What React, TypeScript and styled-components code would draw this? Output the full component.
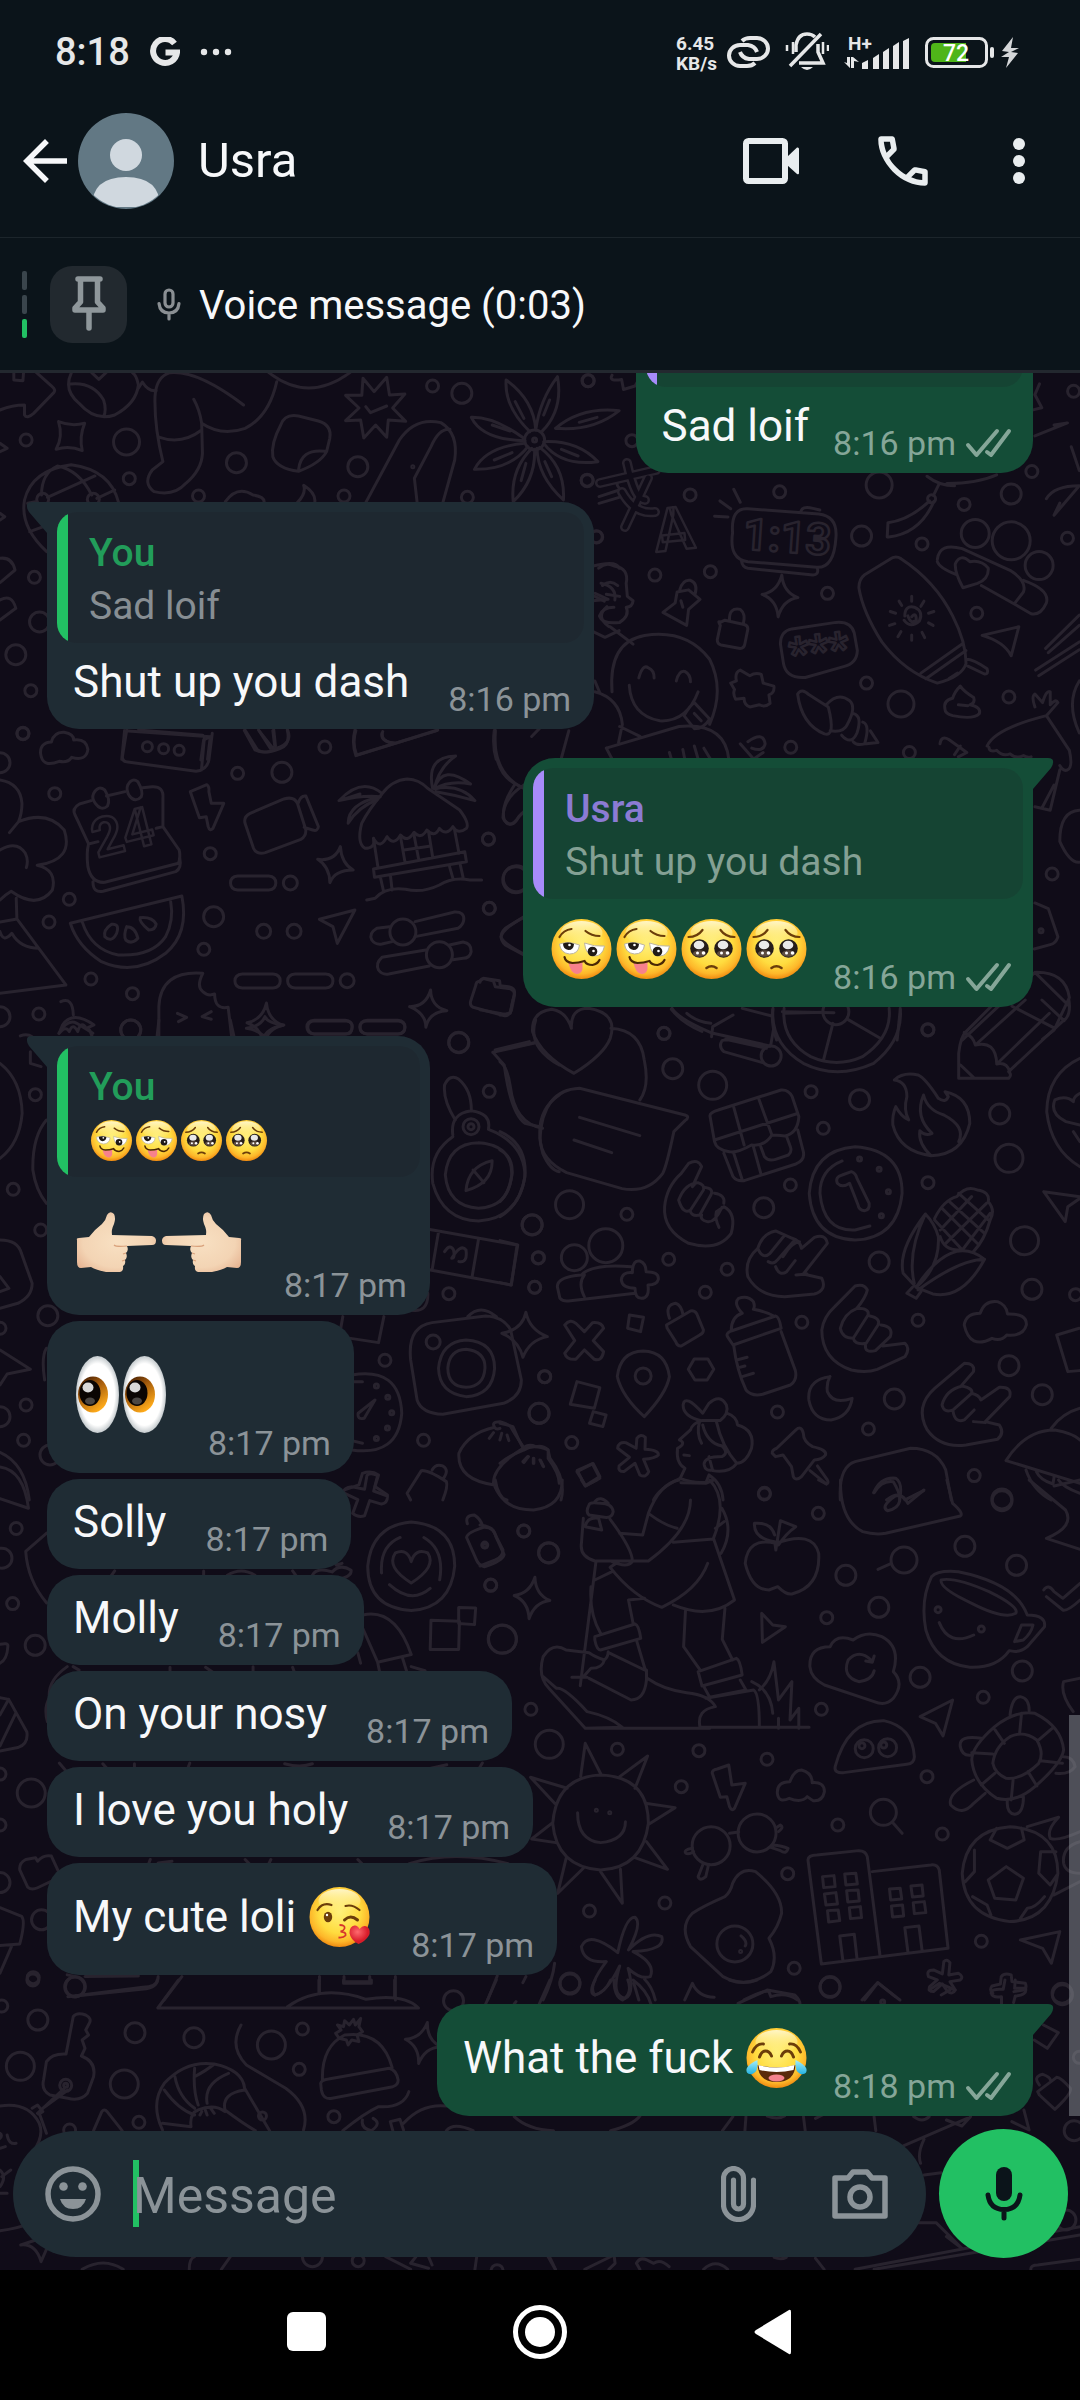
import React from "react";
import styled, { createGlobalStyle, css } from "styled-components";

/* ---------- base ---------- */

const Global = createGlobalStyle`
  *, *::before, *::after { box-sizing: border-box; }
  body { margin: 0; background: #000; }
  button { border: 0; padding: 0; background: none; color: inherit; font: inherit; cursor: pointer; }
`;

const c = {
  bar: "#0b141a",
  barIcon: "#e9edef",
  wall: "#100c18",
  doodle: "#28232e",
  incoming: "#1f2c34",
  incomingQuote: "#1e2830",
  outgoing: "#144d37",
  outgoingQuote: "#154433",
  text: "#f7f8fa",
  muted: "#8b9398",
  mutedOut: "#85a698",
  green: "#22c063",
  violet: "#a78bfa",
};

const Screen = styled.div`
  display: flex;
  flex-direction: column;
  height: 100vh;
  font-family: Roboto, "Noto Sans", sans-serif;
  color: ${c.text};
  background: ${c.bar};
`;

/* ---------- status bar ---------- */

const StatusBar = styled.div`
  display: flex;
  align-items: center;
  justify-content: space-between;
  height: 85px;
  padding: 19px 61px 0 55px;
  color: #e6e7e8;
`;

const StatusGroup = styled.div<{ $gap: number }>`
  display: flex;
  align-items: center;
  gap: ${(p) => p.$gap}px;
`;

const Clock = styled.span`
  font-size: 38px;
  font-weight: 500;
  line-height: 44px;
`;

const Speed = styled.span`
  display: flex;
  flex-direction: column;
  padding-top: 4px;
  font-size: 19px;
  font-weight: 700;
  line-height: 20px;
`;

/* ---------- chat header ---------- */

const Header = styled.header`
  display: flex;
  align-items: center;
  height: 153px;
  padding: 0 12px;
  border-bottom: 1px solid #1c252b;
`;

const Contact = styled.button`
  display: flex;
  flex: 1;
  align-items: center;
  gap: 24px;
  min-width: 0;
`;

const Name = styled.span`
  font-size: 49px;
  line-height: 56px;
`;

const IconButton = styled.button<{ $width: number }>`
  display: flex;
  align-items: center;
  justify-content: center;
  width: ${(p) => p.$width}px;
  height: 96px;
  color: ${c.barIcon};
`;

/* ---------- pinned message ---------- */

const PinnedBar = styled.button`
  display: flex;
  align-items: center;
  height: 135px;
  padding-left: 22px;
  border-bottom: 3px solid #23282f;
  text-align: left;
`;

const Markers = styled.span`
  display: flex;
  flex-direction: column;
  gap: 5px;
  margin-right: 23px;
`;

const Marker = styled.span<{ $active?: boolean }>`
  width: 5px;
  height: 19px;
  border-radius: 2px;
  background: ${(p) => (p.$active ? c.green : "#3a454c")};
`;

const PinTile = styled.span`
  display: flex;
  align-items: center;
  justify-content: center;
  width: 77px;
  height: 77px;
  margin-right: 30px;
  border-radius: 22px;
  background: #22292f;
`;

const PinnedText = styled.span`
  margin-left: 18px;
  padding-top: 4px;
  font-size: 40px;
  line-height: 48px;
`;

/* ---------- conversation ---------- */

const Chat = styled.main`
  position: relative;
  display: flex;
  flex: 1;
  flex-direction: column;
  min-height: 0;
  overflow: hidden;
  background: ${c.wall};
`;

const Wallpaper = styled.svg`
  position: absolute;
  inset: 0;
  width: 100%;
  height: 100%;
  fill: none;
  stroke: ${c.doodle};
  stroke-width: 3;
  stroke-linecap: round;
  stroke-linejoin: round;
  path { vector-effect: non-scaling-stroke; }
`;

const Messages = styled.ol`
  position: relative;
  display: flex;
  flex: 1;
  flex-direction: column;
  justify-content: flex-end;
  min-height: 0;
  margin: 0;
  padding: 0 47px;
  list-style: none;
  overflow: hidden;
`;

const ScrollThumb = styled.span`
  position: absolute;
  right: 0;
  bottom: 0;
  width: 11px;
  height: 23%;
  background: rgba(139, 146, 152, 0.5);
`;

const Bubble = styled.li<{ $out?: boolean; $tail?: boolean; $joined?: boolean }>`
  position: relative;
  flex: none;
  align-self: ${(p) => (p.$out ? "flex-end" : "flex-start")};
  margin-top: ${(p) => (p.$joined ? 6 : 29)}px;
  padding: 10px;
  border-radius: 32px;
  background: ${(p) => (p.$out ? c.outgoing : c.incoming)};
  ${(p) => p.$tail && (p.$out ? css`border-top-right-radius: 0;` : css`border-top-left-radius: 0;`)}
`;

const TailShape = styled.svg<{ $out?: boolean }>`
  position: absolute;
  top: 0;
  ${(p) => (p.$out ? "left: 100%;" : "right: 100%; transform: scaleX(-1);")}
  fill: ${(p) => (p.$out ? c.outgoing : c.incoming)};
`;

const Quote = styled.blockquote<{ $out?: boolean }>`
  margin: 0;
  min-height: 131px;
  padding: 18px 20px 14px 32px;
  border-radius: 20px;
  background: linear-gradient(
    to right,
    ${(p) => (p.$out ? c.violet : c.green)} 11px,
    ${(p) => (p.$out ? c.outgoingQuote : c.incomingQuote)} 11px
  );
  font-size: 39px;
  line-height: 46px;
`;

const QuoteName = styled.div<{ $out?: boolean }>`
  margin-bottom: 7px;
  font-weight: 500;
  color: ${(p) => (p.$out ? "#8b7bd4" : "#229d5a")};
`;

const QuoteText = styled.div<{ $out?: boolean }>`
  display: flex;
  align-items: center;
  min-height: 46px;
  color: ${(p) => (p.$out ? "#84a094" : "#878e93")};
`;

const Row = styled.div<{ $out?: boolean; $quoted?: boolean }>`
  display: flex;
  align-items: flex-end;
  justify-content: space-between;
  gap: ${(p) => (p.$out ? 24 : 39)}px;
  padding: ${(p) => (p.$quoted ? 13 : 7)}px 13px 0 16px;
`;

const Body = styled.div`
  display: flex;
  align-items: center;
  padding-bottom: 11px;
  font-size: 44px;
  line-height: 52px;
  white-space: pre;
`;

const Meta = styled.div<{ $out?: boolean }>`
  display: flex;
  align-items: center;
  gap: 10px;
  color: ${(p) => (p.$out ? c.mutedOut : c.muted)};
  font-size: 34px;
  line-height: 40px;
  white-space: nowrap;
`;

const Glyph = styled.svg<{ $w: number; $h: number; $my?: number; $mx?: number }>`
  flex: none;
  width: ${(p) => p.$w}px;
  height: ${(p) => p.$h}px;
  margin: ${(p) => p.$my ?? 0}px ${(p) => p.$mx ?? 0}px;
  overflow: visible;
`;

/* ---------- composer ---------- */

const Composer = styled.form`
  position: relative;
  display: flex;
  align-items: center;
  gap: 13px;
  padding: 13px 12px 12px 13px;
`;

const Pill = styled.div`
  display: flex;
  flex: 1;
  align-items: center;
  min-width: 0;
  height: 126px;
  padding: 0 38px 0 32px;
  border-radius: 63px;
  background: ${c.incoming};
  color: ${c.muted};
`;

const Field = styled.label`
  position: relative;
  display: flex;
  flex: 1;
  align-items: center;
  min-width: 0;
  height: 68px;
  margin: 0 30px 0 31px;
`;

const Caret = styled.span`
  position: absolute;
  left: 1px;
  width: 6px;
  height: 67px;
  background: ${c.green};
`;

const MessageInput = styled.input`
  position: relative;
  width: 100%;
  height: 64px;
  padding: 4px 0 0 1px;
  border: 0;
  outline: 0;
  background: transparent;
  color: ${c.text};
  font: 400 50px/60px Roboto, "Noto Sans", sans-serif;
  &::placeholder { color: ${c.muted}; opacity: 1; }
`;

const PillActions = styled.div`
  display: flex;
  align-items: center;
  gap: 76px;
`;

const PlainButton = styled.button`
  display: flex;
  flex: none;
`;

const VoiceButton = styled.button`
  display: flex;
  flex: none;
  align-items: center;
  justify-content: center;
  width: 129px;
  height: 129px;
  border-radius: 50%;
  background: ${c.green};
  color: ${c.bar};
`;

/* ---------- system navigation ---------- */

const NavBar = styled.nav`
  display: flex;
  justify-content: center;
  height: 130px;
  padding-bottom: 6px;
  background: #000;
`;

const NavButton = styled.button`
  display: flex;
  align-items: center;
  justify-content: center;
  width: 233px;
`;

/* ---------- emoji drawings ---------- */

const EmojiDefs = () => (
  <defs>
    <radialGradient id="face" cx="50%" cy="42%" r="58%">
      <stop offset="0" stopColor="#fff07a" />
      <stop offset=".6" stopColor="#ffdc3f" />
      <stop offset=".85" stopColor="#fdb72a" />
      <stop offset="1" stopColor="#f08a10" />
    </radialGradient>
    <linearGradient id="shine" x1="0" y1="0" x2="0" y2="1">
      <stop offset="0" stopColor="#fffbe0" stopOpacity=".85" />
      <stop offset="1" stopColor="#fff3a0" stopOpacity="0" />
    </linearGradient>
    <radialGradient id="skin" cx="50%" cy="50%" r="65%">
      <stop offset="0" stopColor="#f8e0c2" />
      <stop offset=".65" stopColor="#f3d4b4" />
      <stop offset="1" stopColor="#e5b18f" />
    </radialGradient>
    <radialGradient id="ball">
      <stop offset=".8" stopColor="#fff" />
      <stop offset="1" stopColor="#c4cacd" />
    </radialGradient>
    <linearGradient id="iris" x1="0" y1="0" x2=".6" y2="1">
      <stop offset="0" stopColor="#2c0f02" />
      <stop offset=".45" stopColor="#a35a0c" />
      <stop offset="1" stopColor="#ffab1a" />
    </linearGradient>
    <radialGradient id="heart" cx="40%" cy="35%">
      <stop offset="0" stopColor="#ff6a6f" />
      <stop offset="1" stopColor="#d91c2a" />
    </radialGradient>
    <linearGradient id="tear" x1="0" y1="0" x2="0" y2="1">
      <stop offset="0" stopColor="#a5eefa" />
      <stop offset="1" stopColor="#27b3e0" />
    </linearGradient>
  </defs>
);

const FaceBase = () => (
  <>
    <circle cx="30" cy="30" r="30" fill="url(#face)" />
    <ellipse cx="30" cy="14" rx="21" ry="12" fill="url(#shine)" />
  </>
);

const brown = { fill: "none", stroke: "#6b3d0a", strokeWidth: 2.2, strokeLinecap: "round" as const };

const Woozy = () => (
  <>
    <FaceBase />
    <path d="M8 18Q12 11 20 10M34 12Q40 17 48 17" {...brown} />
    <path d="M8 25Q17 22 28 26Q27 35 18 35Q9 34 8 25z" fill="#fff" stroke="#bdb5a2" strokeWidth="1" />
    <path d="M33 24Q43 28 53 27Q51 37 43 37Q34 36 33 24z" fill="#fff" stroke="#bdb5a2" strokeWidth="1" />
    <path d="M11.500 24.500Q17 22.500 22.500 25Q22 31 17 31Q11.500 30 11.500 24.500z" fill="#1f1a17" />
    <circle cx="41" cy="32.500" r="4.800" fill="#1f1a17" />
    <circle cx="18" cy="26" r="1.300" fill="#fff" />
    <circle cx="42" cy="32" r="1.300" fill="#fff" />
    <path d="M17 44Q24 46 31 43L31 50Q30 55 25 55Q19 54 17 44z" fill="#f7818c" />
    <path d="M13 38Q14 43.500 21 44Q27 44 33 42Q35 46 41 46Q46 45 48 41" {...brown} stroke="#4a2705" strokeWidth={2.2} />
  </>
);

const Pleading = () => (
  <>
    <FaceBase />
    <path d="M7 18Q16 18 21 11M53 18Q44 18 39 11" {...brown} />
    {[18, 42].map((x) => (
      <g key={x}>
        <circle cx={x} cy="29.500" r="9.300" fill="#251d1a" />
        <ellipse cx={x} cy="34.500" rx="6.500" ry="3.300" fill="#5d4c41" />
        <ellipse cx={x - 0.5} cy="26" rx="5.300" ry="4.300" fill="#e9e9e9" />
        <circle cx={x - 2} cy="34" r="1.500" fill="#fff" />
        <circle cx={x + 4} cy="34" r="1.800" fill="#fff" />
      </g>
    ))}
    <path d="M25 49Q30 45.500 35 49" {...brown} strokeWidth={2.6} />
  </>
);

const Kiss = () => (
  <>
    <FaceBase />
    <path d="M8 23Q13 15 22 18M36 19Q43 17 50 23" {...brown} />
    <ellipse cx="18.500" cy="30" rx="4.200" ry="5.200" fill="#6b3d0a" />
    <circle cx="17.500" cy="28" r="1.200" fill="#fff" />
    <path d="M35 33Q41 27 48 33" {...brown} strokeWidth={3} />
    <path d="M30 38Q36 38 35 41.500Q34 44 31 44.500Q37 45 36 48.500Q34 51 29 50.500" fill="none" stroke="#d6342c" strokeWidth="1.800" />
    <path d="M49 57Q41 53 40 46Q40 39 45 38.500Q48 38 50 42Q54 37 58 40Q62 44 59 49Q56 54 49 57z" fill="url(#heart)" />
  </>
);

const Joy = () => (
  <>
    <FaceBase />
    <path d="M6 24Q10 15 17 16M54 24Q50 15 43 16" {...brown} strokeWidth={2.8} />
    <path d="M13 29Q15 23 19 23Q23 23 25 28M35 28Q37 23 41 23Q45 23 47 29" {...brown} strokeWidth={3} />
    <path d="M11 37Q30 42 49 37Q48 54 30 54Q12 54 11 37z" fill="#5a2a0b" />
    <path d="M12 37Q30 42 48 37L47 42Q30 46 13 42z" fill="#fff" />
    <ellipse cx="30" cy="50" rx="8" ry="3.500" fill="#f5838d" />
    <path d="M11 32Q12 44 6 46Q-1 47 0 41Q2 36 11 32z" fill="url(#tear)" />
    <path d="M49 32Q48 44 54 46Q61 47 60 41Q58 36 49 32z" fill="url(#tear)" />
  </>
);

const HandPath = () => (
  <>
    <path
      d="M1 28Q0 26 3 26L13 25Q18 18 26 12Q30 8 31 3Q34-2 38 2Q40 6 38 12Q35 18 36 23L76 24Q80 25 80 28.500Q80 33 76 33L51 34Q53 38 50 41Q52 45 49 48Q50 52 47 54Q48 59 44 60L30 60Q20 58 15 55L5 56Q1 56 1 50z"
      fill="url(#skin)"
    />
    <path d="M51 34Q40 35 38 33M50 41l-3 1M49 48l-3 1" fill="none" stroke="#d9a27c" strokeWidth="1.200" />
  </>
);

const Eyes = () => (
  <>
    {[0, 47].map((x) => (
      <g key={x} transform={`translate(${x} 0)`}>
        <ellipse cx="21.500" cy="38.500" rx="21.500" ry="38.500" fill="url(#ball)" />
        <ellipse cx="17" cy="38.500" rx="15" ry="18" fill="url(#iris)" />
        <ellipse cx="14" cy="37" rx="10.500" ry="13" fill="#0a0503" />
        <ellipse cx="12" cy="31.500" rx="5.500" ry="5" fill="#d8d8d8" />
        <ellipse cx="14" cy="45" rx="5" ry="3.500" fill="#4b4744" />
      </g>
    ))}
  </>
);

type Kind = "woozy" | "pleading" | "kiss" | "joy";
const faces: Record<Kind, [string, () => React.JSX.Element]> = {
  woozy: ["🥴", Woozy],
  pleading: ["🥺", Pleading],
  kiss: ["😘", Kiss],
  joy: ["😂", Joy],
};

const Emoji = ({ kind, small }: { kind: Kind; small?: boolean }) => {
  const [label, Draw] = faces[kind];
  return (
    <Glyph
      role="img"
      aria-label={label}
      viewBox="0 0 60 60"
      $w={small ? 41 : 61}
      $h={small ? 41 : 60}
      $my={small ? 0 : 7}
      $mx={2}
    >
      <Draw />
    </Glyph>
  );
};

const Hand = ({ flip }: { flip?: boolean }) => (
  <Glyph role="img" aria-label={flip ? "👈🏻" : "👉🏻"} viewBox="0 0 80 60" $w={80} $h={60} $my={22} $mx={3}>
    <g transform={flip ? "translate(80 0) scale(-1 1)" : undefined}>
      <HandPath />
    </g>
  </Glyph>
);

/* ---------- wallpaper ---------- */

const S = 6, M = 10, L = 13;
type Patch = { t: [number, number, number, number]; dots: number[][]; d: string[] };

/* Each patch is a sheet of line drawings with its own origin and scale. */
const patches: Patch[] = [
  {
    t: [0, 360, 0.3954, 0.3333],
    dots: [[66, 240, S], [320, 246, L], [598, 308, M], [327, 356, S], [502, 408, S], [905, 320, M], [870, 408, S], [1094, 78, S], [1168, 100, M], [1487, 62, S], [1485, 362, S], [1182, 412, S], [1352, 240, M], [1352, 240, 2], [1508, 530, S], [87, 652, S], [100, 786, M], [40, 884, M], [78, 992, S], [58, 1120, S], [108, 418, S], [236, 418, S], [1044, 320, 1]],
    d: [
      "M0 150Q30 135 62 135L62 165Q68 178 85 160L136 98Q142 90 132 80L85 30M35 30L35 60L58 62L60 30",
      "M180 40Q160 90 200 130Q240 185 290 165Q345 130 350 75Q345 45 335 38M178 72Q235 65 262 120Q270 150 262 170M232 38L250 58L268 38",
      "M350 85L360 66Q375 95 395 92M430 38Q395 50 392 110Q390 200 412 305L385 330Q360 370 390 395Q440 410 470 370Q510 330 512 280L510 190Q505 150 490 118M404 232Q460 255 510 210M510 190Q560 230 620 205Q680 170 700 65M430 38Q500 30 616 135M680 38Q780 130 885 38",
      "M710 195Q720 160 755 168L805 183Q840 195 834 235L826 275Q810 310 755 334Q700 325 690 290Q685 250 710 195M755 330Q760 265 822 274",
      "M918 55L946 95L978 52L985 105L1024 102L993 144L1026 184L982 180L978 232L950 195L920 234L912 180L874 182L908 144L874 106L915 106zM925 140L937 158L978 138",
      "M925 428L1010 240Q1050 170 1115 188Q1160 220 1150 300L1120 428M1138 208Q1110 205 1090 260L1048 355L1055 428",
      "M1340 215Q1275 140 1280 60Q1350 120 1355 210Q1365 120 1410 50Q1425 150 1370 215M1405 205Q1470 140 1566 152Q1500 215 1405 205M1375 245Q1460 240 1512 305Q1420 320 1375 250M1365 262Q1430 320 1425 420Q1360 350 1358 265M1345 265Q1290 330 1298 425Q1355 360 1352 268M1328 250Q1230 260 1200 328Q1290 330 1335 260M1325 235Q1250 170 1192 172Q1220 240 1328 242M1303 125L1325 175M1390 120L1375 165M1465 187L1510 172M1245 195L1290 213M1250 300L1295 278M1330 310L1318 362M1378 305L1395 350M1420 268L1462 288",
      "M148 185Q180 200 214 190Q200 230 208 272Q175 255 142 268Q160 230 148 185",
      "M118 575Q50 500 62 420Q80 330 180 314Q280 330 300 428M105 405Q105 340 145 318Q200 330 232 405M120 412L240 348M245 415L290 390M75 515L110 500M90 425L70 430",
      "M570 425Q600 375 640 405Q670 410 668 428M752 428Q775 400 768 376Q800 400 796 428M1566 360Q1555 370 1566 385M1515 410L1566 390M1515 430L1566 412",
      "M0 595Q30 590 38 630L0 668M0 720Q30 700 40 745L0 780M0 250L18 265L0 275M0 460L12 470L0 480",
      "M1500 618Q1560 600 1566 625M1520 670Q1560 680 1555 720M1505 700L1538 718L1500 722M1535 740Q1505 770 1540 800M1500 815L1530 832L1566 812",
      "M315 1112L532 1130L525 1198M315 1112L308 1198M532 1130L515 1140L508 1200M618 1112L645 1170Q670 1185 700 1165Q740 1150 728 1112M655 1112L690 1165M690 1112L695 1160M900 1112Q890 1150 902 1185L1105 1112M968 1115Q960 1145 1000 1150M1250 1112Q1245 1160 1255 1198",
    ],
  },
  {
    t: [480, 360, 0.3827, 0.4337],
    dots: [[283, 48, S], [397, 186, S], [280, 277, S], [549, 311, S], [783, 304, S], [1043, 288, L], [1442, 257, S], [1388, 309, M], [1265, 333, S], [997, 406, M], [1155, 424, S], [1535, 411, S], [457, 496, S], [602, 488, S], [908, 538, S], [1298, 584, S], [1010, 745, S], [1100, 793, L], [1382, 777, S], [812, 893, S], [1122, 905, S], [1294, 400, 14], [1388, 417, 19], [1461, 474, 14], [1551, 72, S], [1180, 320, 4], [305, 408, S], [95, 1196, L], [22, 1105, S], [24, 1264, S], [1495, 1185, S], [1170, 1545, S], [481, 1553, S], [1466, 1316, 2]],
    d: [
      "M345 35Q335 50 370 45L375 68L405 60L425 30M1445 115L1468 110L1450 80L1462 55M1450 175L1535 145L1500 150M1545 200L1566 255M1480 320Q1500 290 1566 290L1500 358L1515 330",
      "M660 398Q655 340 700 343L885 355Q935 360 930 410Q925 480 880 478L700 465Q650 460 660 398M838 352Q840 335 870 342L888 346M683 462Q685 478 700 480L870 496Q885 495 882 482M663 298L680 328M627 325L655 343M613 360L648 362",
      "M1064 408L1066 375Q1120 370 1175 325M1068 408Q1150 400 1186 326M1185 312L1200 285M1168 268Q1200 290 1240 290M1220 285Q1300 285 1350 265",
      "M990 525Q990 505 1005 495L1070 460Q1085 450 1100 458Q1190 510 1235 590Q1270 650 1270 700Q1260 730 1195 745Q1110 720 1050 650Q1000 580 990 525M1152 722L1260 655M1165 735L1270 670M1270 690Q1290 690 1325 712Q1330 725 1318 724L1275 706M1225 735L1248 722",
      "M1110 590Q1110 565 1135 570Q1160 580 1148 602Q1125 620 1108 600M1128 592Q1140 580 1140 600Q1125 610 1118 590M1128 545V556M1095 556L1102 566M1160 556L1152 568M1072 580L1086 584M1186 580L1172 584M1070 612L1084 608M1184 612L1172 606M1092 638L1100 626M1128 634V646M1162 640L1155 628",
      "M1195 460Q1200 420 1260 435L1385 485Q1430 510 1420 535L1398 560M1195 465Q1200 480 1245 495M1420 508Q1490 530 1480 560Q1465 590 1440 585L1395 562L1310 520M1262 525Q1240 490 1242 470Q1255 445 1280 465Q1310 460 1328 480Q1330 505 1300 515z",
      "M1312 635L1408 615L1388 682Q1370 650 1312 635zM1478 665L1566 588M1485 675L1566 612M1452 715L1566 650M1460 728L1566 668",
      "M785 655Q785 625 815 620L930 605Q970 602 978 630L986 670Q985 700 950 707L850 732Q800 735 793 700z",
      "M345 765Q335 650 430 635Q540 620 600 690Q640 760 600 840M415 733Q425 700 440 710Q455 715 455 733M513 740Q520 715 535 718Q550 725 550 742M390 750Q395 820 470 832Q540 835 570 765M533 820Q550 795 560 790L600 828Q585 850 560 850zM560 815L578 832",
      "M478 582L510 560L515 535L545 530L575 552L545 575L540 612zM522 530Q530 505 550 508Q570 515 562 540M525 555L530 570",
      "M628 605Q620 600 628 612L620 645Q620 655 630 657L680 665Q690 665 692 655L700 620Q700 612 690 610L640 600zM652 600Q650 570 680 575Q695 585 688 608",
      "M655 745L670 740Q665 720 680 715L705 728Q720 720 735 725L740 745L768 752Q770 768 755 772L758 792Q745 802 730 795L705 800Q690 795 690 780L668 782Q660 770 665 760z",
      "M830 770Q840 755 860 772L910 800Q930 870 900 862Q840 840 830 770M905 795Q935 765 965 785Q985 800 960 840Q950 860 915 855M975 815Q1000 820 985 860Q970 890 945 865M1000 835Q1020 840 1005 885Q985 890 975 880M1020 855L1040 882L1010 885",
      "M1215 805Q1210 785 1235 780Q1240 765 1255 752Q1265 765 1290 778Q1295 790 1280 795Q1310 800 1305 815Q1290 830 1235 820Q1215 815 1215 805M1250 795L1275 797",
      "M1325 890Q1345 850 1480 820L1540 900Q1550 940 1535 945Q1525 950 1515 935M1330 893Q1330 905 1350 900Q1365 915 1385 908Q1400 920 1420 912Q1430 918 1440 915M1450 800Q1440 775 1450 770L1470 790Q1480 760 1490 765L1490 795Q1505 780 1510 790L1480 820M1515 945L1490 1038L1450 1030M1500 980L1470 1030M1566 740Q1530 790 1566 860",
      "M1202 885Q1205 865 1225 875L1272 905L1250 915M1240 910L1255 890M300 740L312 765M300 765Q365 780 372 840L362 882M330 895L520 845Q640 835 650 920M330 895L345 920M680 885L715 920L740 905M700 880Q740 855 745 885Q740 905 710 895M365 845L418 868M495 905L500 920M530 898L535 920M560 890L570 920M585 895L602 920",
      "M40 855Q30 960 110 985M232 855L212 920M135 868L155 850M115 980Q60 1010 60 1055Q75 1085 100 1055L110 1045M1566 1038Q1515 1040 1515 1110Q1540 1160 1566 1158M1450 1252L1485 1265L1510 1330Q1505 1345 1490 1348L1448 1358M115 1285Q60 1310 55 1330Q60 1345 115 1370",
      "M0 1435Q0 1425 12 1427L35 1432L40 1445L80 1450Q92 1455 90 1465L82 1500Q75 1512 60 1508L0 1498M500 1497Q530 1530 580 1548M765 1498Q760 1530 775 1568M1098 1498L1090 1568M790 1503L925 1505M1260 1568L1450 1412Q1530 1410 1540 1470L1500 1545L1470 1566M1450 1412L1540 1490M1390 1490L1500 1540",
      "M310 480Q330 465 350 475Q390 480 382 515L385 545L400 555Q398 570 382 570Q392 590 365 605Q320 610 312 590Q320 570 350 570M320 520Q340 505 360 520M330 540L365 545M340 615L400 655M300 545L325 556",
    ],
  },
  {
    t: [0, 720, 0.338, 0.3333],
    dots: [[68, 41, S], [0, 128, M], [162, 221, S], [703, 160, S], [834, 157, M], [961, 81, S], [622, 401, S], [205, 538, S], [145, 606, S], [632, 590, M], [603, 688, S], [269, 777, S], [392, 821, S], [387, 930, M], [115, 882, S], [0, 890, M], [859, 489, 7], [780, 634, 7], [870, 634, 7], [1027, 782, 7], [1445, 357, S], [1526, 479, L], [1448, 565, S], [1357, 967, M], [436, 80, 5], [484, 86, 5], [530, 91, 5], [1192, 636, 13], [1300, 704, 13]],
    d: [
      "M120 100Q118 68 152 66Q160 35 190 37Q218 42 218 60Q255 55 260 88Q255 125 212 112Q200 130 175 124Q125 145 120 100z",
      "M375 30L362 110Q362 125 378 126L580 154Q612 150 618 120L628 40M410 30L600 46M605 50L596 150M725 30L762 90Q780 105 830 85Q860 75 850 30M765 30L800 85M810 30L815 78M1050 30Q1040 70 1053 107L1295 30M1130 40Q1125 65 1170 70M1465 30Q1455 160 1550 205M1522 195Q1480 260 1492 300Q1515 330 1535 290L1550 275",
      "M0 180Q60 190 65 250Q65 280 55 305Q140 270 190 330Q220 420 110 436Q170 450 155 510Q110 570 33 514Q15 525 0 540M55 305L28 338M0 390Q50 360 75 400Q85 420 78 443M48 535L50 597L0 606M50 597L195 795L0 820M0 635Q10 670 35 640Q60 685 115 685",
      "M262 372L222 285Q212 265 235 252L270 242M315 228L370 215M422 203L450 200Q485 198 482 235V320L530 390Q535 410 528 430L310 487Q270 490 260 440Q255 400 262 372L290 365M275 485Q275 520 305 514L520 455Q538 445 532 415M462 325L482 320",
      "M277 220Q290 195 310 210Q328 240 318 258Q300 275 282 250Q270 235 277 220M378 195Q390 172 408 185Q425 215 418 230Q400 250 383 228Q372 210 378 195",
      "M563 215L612 194Q620 200 618 215L625 250L662 250L630 325Q620 335 616 320L610 290L590 293z",
      "M725 310Q720 290 740 280L840 237Q870 228 880 250L905 330Q905 350 890 358L785 398Q760 405 750 385zM882 250Q890 225 905 228L942 320Q940 335 925 330L900 322",
      "M940 418Q990 425 1007 380Q1010 430 1045 450Q990 450 976 488Q975 440 940 418",
      "M703 468H795Q816 470 816 489Q816 508 795 510H703Q682 508 682 489Q682 470 703 468zM717 762H808Q829 764 829 783Q829 802 808 804H717Q695 802 695 783Q695 764 717 762zM873 762H964Q985 764 985 783Q985 802 964 804H873Q851 802 851 783Q851 764 873 762zM930 901H1021Q1042 903 1042 921Q1042 940 1021 942H930Q908 940 908 921Q908 903 930 901zM1087 901H1177Q1198 903 1198 921Q1198 940 1177 942H1087Q1065 940 1065 921Q1065 903 1087 901z",
      "M1130 222Q1160 180 1205 177Q1240 178 1265 205L1360 270Q1390 310 1380 325Q1355 345 1340 320Q1320 350 1300 325Q1285 355 1263 330Q1245 360 1225 337Q1205 370 1185 345Q1165 380 1145 350Q1125 390 1106 357Q1110 385 1080 385Q1055 370 1070 310Q1090 270 1130 222",
      "M1130 220Q1070 170 1003 242Q1070 225 1125 230Q1030 250 1030 310Q1060 260 1115 240M1280 205Q1260 110 1348 108Q1300 140 1285 205Q1310 130 1392 192Q1330 180 1285 207Q1360 190 1405 242Q1350 225 1290 215M1065 222L1003 242",
      "M1105 355L1118 440M1345 330L1358 400M1185 350L1198 425M1268 335L1280 410M1225 345L1238 415M1195 390L1275 378M1105 447L1375 395L1380 425L1108 472zM1125 470L1135 515M1155 465L1160 510M1330 440L1340 475M1362 435L1370 472M1085 540L1110 535Q1140 500 1200 508Q1250 520 1300 495Q1340 470 1390 480L1425 480",
      "M945 598L1050 570L998 670L985 620Z",
      "M1152 620L1115 625Q1090 640 1100 660Q1110 675 1130 672L1160 665M1228 605L1345 576Q1375 575 1372 600Q1370 615 1355 625L1228 650M1260 690L1130 712Q1110 730 1120 750Q1130 765 1150 762L1270 738M1330 675L1370 666Q1395 670 1394 695Q1390 715 1370 715L1335 720",
      "M208 610L538 528Q560 640 490 700Q400 770 300 725Q230 680 208 610M243 605Q270 690 350 705Q450 710 490 650Q515 600 505 545M330 613Q305 630 310 650Q330 670 345 640Q355 610 330 613M375 620Q365 645 372 660Q390 675 408 655Q400 620 375 620M415 593Q410 605 440 630Q460 630 462 612Q450 590 415 593",
      "M470 948V860Q475 750 600 760Q580 800 600 815Q615 830 635 822Q635 870 675 862L685 948M525 880L552 892L528 905M625 875L598 890L625 898",
      "M180 845Q215 830 217 885M175 940L185 915Q215 870 278 915L255 925Q240 900 230 935Q215 905 205 935Q195 915 175 940M265 930L272 948M60 948Q80 940 95 950",
      "M1212 860Q1260 860 1274 810Q1275 860 1322 872Q1270 875 1260 922Q1260 880 1212 860",
      "M1408 795Q1408 785 1420 783L1430 775L1478 782L1480 797L1505 800Q1525 805 1522 820L1510 875Q1505 890 1490 887L1400 862Q1390 858 1392 845zM1550 590L1495 625Q1470 650 1495 675L1550 705M1465 990L1566 965",
    ],
  },
  {
    t: [0, 1020, 0.3571, 0.3333],
    dots: [[366, 30, M], [1285, 68, M], [1370, 214, S], [99, 224, S], [37, 508, S], [114, 630, S], [1490, 615, M], [1507, 714, S], [1497, 802, S], [1257, 821, S], [134, 887, M], [0, 925, S], [1078, 1021, S], [1525, 1070, S], [1213, 966, 7], [73, 1155, S], [66, 1261, S], [0, 1190, M], [1509, 1180, M], [1186, 1261, S], [1319, 320, 8], [1319, 320, 3], [1054, 1098, 2], [1086, 1132, 2], [1097, 1178, 2], [1085, 1224, 2], [1054, 1256, 2], [140, 1305, M]],
    d: [
      "M165 40Q190 -5 215 10L260 40M440 48L445 0M655 48L645 0M690 25Q730 20 742 -10Q750 10 795 15Q750 25 740 48Q720 30 690 25M880 3H970Q988 5 986 22Q985 42 970 42H880Q862 40 862 22Q862 3 880 3M1028 3H1115Q1134 5 1134 22Q1134 42 1115 42H1028Q1008 40 1008 22Q1008 3 1028 3",
      "M1500 0Q1475 80 1566 135M1380 97L1500 68M1380 97L1412 135Q1430 280 1470 310L1516 322M1566 225Q1490 280 1520 400Q1540 450 1566 455",
      "M1275 300Q1240 240 1245 195Q1260 160 1285 178Q1320 210 1320 270M1268 345Q1260 280 1320 272Q1375 280 1368 325M1268 350Q1200 400 1212 490Q1240 600 1340 603Q1450 595 1470 470Q1470 370 1368 328M1340 368Q1435 375 1433 465Q1425 560 1340 565Q1255 560 1247 465Q1255 370 1340 368M1378 422Q1310 440 1305 512Q1380 490 1378 422M1325 450L1355 488",
      "M1200 628L1448 675L1432 795L1205 750M1228 635L1210 750M1340 658L1322 770M1245 695Q1260 670 1270 690Q1275 715 1265 715Q1290 670 1305 690Q1310 730 1285 725M1198 820Q1200 880 1150 870M960 890L950 950L1060 968L1075 890",
      "M0 130Q60 180 62 280Q55 370 0 415M130 300Q90 350 92 450Q100 510 130 550M85 95L85 130L115 140M0 660Q50 660 60 700L90 790Q90 830 50 850L0 865M0 770L25 805L0 815M0 990L85 1048L20 1062L0 1095M130 985Q115 1010 125 1080M0 1297Q70 1330 82 1440",
      "M1150 1020Q1140 920 1210 908L1360 888Q1410 890 1430 930L1460 1080Q1460 1130 1410 1150L1240 1183Q1180 1180 1168 1140zM1310 890Q1345 850 1390 890M1305 960Q1385 965 1385 1045Q1380 1125 1305 1130Q1230 1120 1228 1045Q1235 965 1305 960M1305 988Q1360 995 1358 1045Q1355 1100 1305 1102Q1255 1100 1254 1045Q1258 990 1305 988M985 1065Q1120 1040 1125 1180Q1115 1310 985 1290M1050 1140L1003 1180Q1000 1200 1020 1195zM990 1085L1015 1085M985 1262L1015 1270",
      "M1385 1395Q1280 1380 1285 1300Q1310 1240 1385 1222Q1375 1205 1400 1205Q1420 1210 1430 1220Q1440 1240 1465 1280M1385 1222Q1390 1230 1400 1225M1465 1285Q1380 1340 1382 1390Q1400 1440 1420 1440M1465 1285Q1480 1270 1500 1280Q1520 1275 1535 1290L1535 1315Q1566 1360 1566 1390M1370 1255L1382 1238M1400 1260L1405 1240M1425 1262L1420 1245M1467 1328L1480 1310M1495 1330L1495 1315M1520 1338L1512 1320",
      "M965 1410L1005 1395L1015 1360Q1040 1350 1060 1365L1050 1400L1085 1425M1150 1440L1140 1420L1180 1352Q1200 1350 1250 1385Q1255 1400 1240 1440M1210 1350Q1220 1330 1240 1338Q1260 1350 1240 1378",
    ],
  },
  {
    t: [500, 1000, 0.3699, 0.3333],
    dots: [[443, 100, S], [467, 206, M], [575, 256, 14], [841, 275, S], [874, 385, S], [972, 299, M], [1157, 89, S], [1351, 342, M], [1376, 475, 14], [1157, 548, S], [785, 555, S], [713, 623, M], [188, 614, 14], [87, 674, M], [343, 643, S], [104, 773, S], [94, 862, S], [456, 778, S], [614, 808, S], [555, 877, S], [1025, 786, M], [1418, 722, 14], [1438, 868, M], [1130, 961, S], [816, 967, S], [1376, 1097, M], [1466, 1184, M], [1066, 1197, M], [996, 1287, S], [750, 1236, S], [121, 1130, S], [106, 1240, M], [194, 1328, S], [715, 1480, S], [1282, 1427, S], [1357, 1497, M], [1556, 884, S], [286, 737, 17], [201, 773, 13], [733, 168, 10], [908, 35, 13], [387, 1128, 8], [972, 477, 2], [1025, 508, 2], [1050, 575, 2], [1031, 647, 2]],
    d: [
      "M193 85Q190 25 240 25Q320 40 298 115Q280 165 200 220Q110 165 88 95Q85 35 140 28Q180 35 193 85M300 85Q380 90 390 180Q405 260 378 300M0 150L92 128M0 185Q20 200 28 260Q40 370 115 385M35 0L28 40L0 45",
      "M108 415Q115 270 215 265L500 345Q515 350 500 362L470 395Q450 500 440 520Q400 580 330 566L180 518Q110 480 108 415M215 352L378 407M200 420L302 458",
      "M465 25Q480 55 570 98L730 138M505 40Q530 65 570 70M630 45L575 80L572 110M615 118L600 122Q590 140 605 155L710 188M610 118L720 145M655 25L735 48M740 85L732 135M738 25Q730 130 820 190Q910 240 1010 190Q1090 120 1082 25M768 25Q760 120 840 170Q910 205 980 170Q1060 110 1052 25M770 40L875 37M940 58L1028 115M900 70L875 178",
      "M568 350Q565 338 590 330L760 270Q780 268 790 290L808 350Q805 400 770 408Q745 405 735 405Q715 440 680 435Q640 460 620 455Q585 450 580 425zM632 322L660 435M700 298L735 405M580 420L800 342M605 460L630 530Q640 545 660 542L800 492Q825 480 820 455L805 390M632 460L655 540M685 440L705 520M705 440L715 470Q725 485 745 478L780 465Q790 455 785 440L775 410",
      "M1066 240Q1090 215 1130 225Q1150 235 1185 295Q1205 310 1212 290L1203 275Q1270 290 1270 370Q1250 465 1165 467Q1080 455 1062 375Q1060 345 1070 320Q1085 350 1105 360Q1090 330 1100 290Q1100 245 1066 240M1165 467Q1130 430 1135 392Q1150 410 1168 400Q1120 350 1145 285Q1155 330 1200 345Q1260 380 1240 425",
      "M960 440Q1088 450 1087 580Q1075 715 960 720Q845 715 836 580Q845 450 960 440M925 483Q865 510 865 580Q875 695 960 690L1000 678M912 550Q905 530 925 525L950 515Q962 520 965 535L998 610Q1000 630 985 632Q970 630 968 615L945 550Q925 565 912 550",
      "M1240 235V160Q1245 110 1260 95L1345 0M1240 235H1375Q1385 225 1375 215L1520 65Q1545 50 1538 0M1255 97Q1280 110 1285 135L1420 0M1285 135Q1340 120 1343 192Q1370 185 1378 215M1343 192L1485 40M1465 0L1525 62M1245 195L1280 232",
      "M445 620Q450 560 490 520L510 490Q535 475 545 500L520 560L530 548M445 620Q440 690 510 730Q590 755 625 700Q640 640 605 620L585 635Q580 655 592 682M483 600Q500 550 535 548Q555 555 550 570L515 630Q495 645 483 600M550 562Q580 565 570 585L540 645Q520 650 515 635M580 580Q610 585 605 610M600 622Q580 670 560 665Q540 660 545 645",
      "M697 745Q710 700 745 693L790 715Q810 720 815 745L850 712Q880 700 885 730L820 822L870 835Q885 870 850 882L770 890Q700 890 670 830Q660 780 697 745M697 745Q710 780 730 760L770 705M725 785Q740 795 750 780L795 722M745 800Q755 830 775 815L798 782M810 725Q790 725 765 770M800 825L830 822",
      "M870 990Q875 950 905 920L960 858Q985 850 993 870Q990 890 965 925M870 990Q870 1080 950 1110Q990 1120 1020 1108L1095 1070Q1110 1045 1095 1030L1035 1038M920 985Q930 940 965 925Q1000 925 995 945L955 1015Q925 1015 920 985M1000 948Q1030 955 1022 975L990 1030Q960 1035 955 1015M1030 975Q1065 980 1055 1010L1015 1052Q985 1060 988 1035",
      "M1195 1215Q1205 1170 1250 1158Q1280 1165 1275 1180L1225 1230Q1200 1240 1195 1215M1275 1180Q1295 1185 1300 1200L1350 1162Q1385 1160 1378 1190L1312 1265L1350 1275Q1365 1300 1345 1318L1260 1335Q1190 1345 1155 1290Q1120 1220 1175 1165L1255 1090Q1285 1090 1280 1115L1245 1160M1225 1235Q1230 1270 1255 1260L1282 1230M1280 1265L1312 1268",
      "M1150 642Q1075 750 1090 820L1125 862Q1190 800 1185 710Q1175 670 1150 642M1150 642Q1100 760 1120 850M1125 862Q1220 700 1310 778Q1250 900 1170 882zM1310 778Q1240 780 1130 870M1115 862L1100 880L1125 895L1138 875M1175 655Q1200 600 1235 590Q1260 555 1290 570Q1325 575 1320 605Q1340 630 1325 660Q1310 720 1280 755M1190 710Q1200 750 1240 750M1195 625L1290 730M1175 660L1250 750M1215 605L1310 700M1240 580L1320 660M1190 690L1275 590M1205 730L1315 610M1250 750L1325 640",
      "M155 860Q155 830 220 825Q250 790 355 800M155 860L162 895Q170 905 185 903L365 880M228 825Q210 850 228 890M358 810Q360 780 378 783Q395 790 395 815Q430 815 428 838Q425 855 400 855Q405 895 382 895Q365 895 365 865Q330 865 328 840Q330 815 358 818z",
      "M5 1000Q60 990 70 937Q80 990 128 1010Q80 1020 62 1072Q50 1020 5 1000M175 975Q190 955 205 970L228 995L250 968Q275 965 280 985L252 1022L280 1055Q275 1085 255 1078L228 1050L205 1078Q180 1080 175 1060L202 1022z",
      "M350 945L388 952L380 995L345 985zM450 975L515 933Q530 930 535 950L550 990Q550 1000 540 1005L490 1038Q480 1040 475 1025L452 985zM458 955Q445 915 475 910Q490 915 495 945M525 1077H562L578 1108L560 1140H527L509 1108z",
      "M317 1130Q325 1055 387 1053Q450 1055 458 1130Q450 1180 390 1250Q330 1190 317 1130M208 1145L270 1163L255 1225L190 1213zM252 1235L287 1245L278 1280L242 1270zM208 1415L250 1392L270 1435L232 1458z",
      "M615 1010Q610 1000 625 993L745 948Q755 950 760 985L630 1035zM625 993Q625 950 655 940Q630 910 645 895Q670 885 685 905Q690 920 685 928Q720 935 740 948M632 1038Q640 1110 665 1170Q680 1190 710 1183L785 1155Q805 1140 798 1110L760 995M640 1080L668 1072M645 1103L662 1098M655 1130L685 1120",
      "M1255 975Q1260 940 1298 940Q1310 900 1345 905Q1370 915 1372 942Q1425 940 1423 975Q1415 1010 1370 1005Q1355 1025 1330 1015Q1270 1050 1255 975M1566 985L1505 1005L1535 1115L1566 1112M892 1130Q830 1140 835 1200Q845 1260 895 1260Q945 1250 952 1195Q900 1215 885 1175Q882 1150 892 1130",
      "M736 1360Q735 1350 748 1345L800 1290Q815 1275 820 1300Q820 1325 845 1340Q885 1350 880 1365Q870 1380 850 1380L815 1430Q800 1445 793 1430L788 1400L765 1365L745 1370zM838 1412L882 1452Q890 1450 885 1440L858 1398",
      "M318 1345Q320 1325 340 1328L368 1345L370 1315Q380 1300 393 1312L392 1348Q430 1350 428 1365Q420 1375 388 1378L402 1415Q395 1435 378 1425L365 1390L335 1415Q318 1415 322 1398L350 1372z",
      "M548 1240Q500 1180 495 1215Q495 1250 545 1262H595Q620 1240 612 1215Q595 1180 565 1210zM515 1290Q495 1310 485 1320Q505 1330 480 1345Q475 1390 500 1405L487 1435Q520 1450 557 1447L565 1425M545 1262Q520 1270 515 1290M540 1262Q530 1300 545 1330M548 1275Q560 1330 600 1338M585 1265Q600 1340 640 1390M600 1338Q620 1360 600 1370Q550 1370 552 1395Q555 1415 575 1410M615 1240Q640 1250 642 1275Q690 1290 680 1345Q665 1390 640 1390M640 1390Q620 1420 575 1412L565 1370M497 1365L512 1367M487 1435Q430 1465 415 1500M565 1425Q600 1450 603 1500",
      "M920 1500Q915 1400 960 1385L1110 1345Q1180 1345 1205 1410L1220 1500M1010 1478Q1030 1430 1070 1435Q1090 1450 1080 1500M1045 1500Q1080 1470 1095 1500L1145 1472M1368 1382Q1420 1290 1500 1290Q1550 1300 1568 1320M1368 1382L1568 1450M1422 1410Q1440 1470 1490 1500M1450 1415Q1460 1440 1495 1452L1498 1430M1510 1440Q1520 1460 1568 1480M1490 1285Q1520 1240 1568 1225M0 395Q70 430 68 520Q60 610 0 650M0 450Q35 470 33 520Q25 580 0 605M0 722L48 735L30 855L0 848",
      "M1568 175Q1480 220 1478 335Q1490 450 1568 500M1568 280Q1550 290 1550 305Q1530 285 1500 300Q1485 340 1530 365L1568 375M1550 395L1568 425M1470 575L1568 590M1470 575L1528 665L1535 620L1568 595",
      "M0 1270Q20 1275 35 1280Q50 1320 65 1350Q20 1370 0 1390M65 1350Q90 1330 130 1350L135 1375Q180 1440 165 1500M62 1385L75 1370M90 1390V1375M118 1400L110 1382",
    ],
  },
  {
    t: [480, 1480, 0.3827, 0.3333],
    dots: [[743, 42, S], [884, 100, S], [114, 153, S], [179, 218, M], [28, 316, S], [58, 478, 14], [133, 688, S], [181, 793, 14], [359, 808, S], [572, 812, S], [750, 838, S], [526, 920, S], [956, 286, M], [1108, 240, 13], [1267, 199, M], [1402, 256, M], [1364, 62, M], [1042, 382, M], [906, 413, S], [1150, 592, M], [1417, 573, M], [1315, 652, S], [892, 688, S], [1168, 890, S], [1208, 1062, S], [935, 1035, S], [804, 1181, S], [483, 1269, S], [286, 1293, S], [235, 1509, M], [821, 1465, S], [915, 1520, M], [1310, 1384, S], [1521, 1540, M], [1054, 997, 13], [604, 1097, 19], [724, 1059, 19], [666, 1392, 18], [1004, 806, 9], [1065, 803, 9], [998, 797, 3], [1055, 795, 3], [304, 991, 1], [339, 998, 1], [1197, 389, 3], [1310, 447, 3], [681, 1415, 1], [13, 197, 2]],
    d: [
      "M440 100Q470 10 520 0M600 0Q650 60 610 175L665 360Q600 420 505 375M610 0L590 10L525 8M440 100Q480 135 515 145M440 100L425 165L365 160M550 60Q550 150 440 243H300Q260 230 265 190L270 115M340 118Q400 210 398 245Q385 265 345 245M285 75Q285 65 315 70Q345 70 348 95Q345 115 325 112L285 105Q275 95 285 75M300 65Q315 45 335 70M275 140Q280 110 310 115L318 150zM505 187L610 177M595 250Q570 330 475 382Q400 350 340 262L365 243M345 275L300 300M303 245L262 617M240 592L280 592M290 320Q285 400 315 460M430 355L388 360L400 430M300 470L405 432Q415 435 420 475L315 510Q305 510 300 480zM410 485L432 570M435 570V600Q430 660 395 660L285 595M340 520L430 570M335 515Q335 530 325 540Q300 530 285 518L225 510Q190 485 165 530Q150 590 180 625L275 745L372 742Q340 710 280 695Q220 620 200 625L165 590M325 540Q320 565 290 565L270 590M437 595Q480 630 540 638Q600 645 615 680Q565 690 575 742H860M275 745H600M537 390L532 500L575 570M640 385L633 478L660 540M570 575L670 535Q680 540 685 585L580 618zM585 620L600 652L695 630L680 600M590 655L715 630Q730 640 730 742M710 605Q760 630 765 700M730 630Q760 600 768 545L780 660L815 605L810 720L833 685V745M780 715V745M632 85Q665 150 630 220M615 145L638 125",
      "M40 0Q50 90 140 90Q215 80 215 0M265 0L275 18L305 0M0 135Q35 140 38 160L60 210Q60 230 40 240L0 258",
      "M773 190Q700 170 693 250Q710 330 755 330L778 320Q800 345 815 342Q890 320 885 220Q870 150 773 190M773 210L770 185Q715 175 717 130Q760 125 770 165M773 210L785 122L825 140Q800 160 780 195",
      "M942 0Q940 120 1000 155Q1030 165 1060 160L1255 108Q1265 100 1235 70L1220 0M1030 38Q1050 0 1080 5Q1120 80 1065 92Q1045 80 1085 48Q1105 40 1118 70L1160 30M1040 268L1072 252M1435 0L1530 90Q1555 140 1480 175L1568 208M885 0L905 12M1568 0L1500 18",
      "M736 400L765 435L798 440L738 487zM862 560Q860 500 915 500Q930 460 975 480Q1010 450 1050 470Q1100 500 1080 575Q1110 610 1080 655Q1060 680 1030 665L900 615Q865 595 862 560M1022 540Q990 505 962 540Q945 590 990 605Q1025 600 1030 572M1008 543L1025 547L1030 528",
      "M1180 290Q1195 270 1250 275Q1400 310 1430 405Q1480 405 1475 440L1430 500Q1410 520 1383 512Q1350 565 1280 562Q1190 550 1165 450Q1150 360 1180 290M1205 300Q1240 290 1330 335Q1410 380 1400 400Q1370 420 1285 370Q1200 325 1205 300M1200 428Q1225 500 1290 465M1415 435H1445Q1440 460 1420 480L1397 485zM1473 330Q1485 310 1500 335L1523 355L1568 310M1480 350L1523 390Q1535 395 1568 360",
      "M1150 710L1235 660L1210 768L1190 730zM928 860Q960 720 1055 722Q1130 740 1135 830Q1135 850 1115 853L950 878Q925 880 928 860",
      "M1285 840Q1285 800 1345 740Q1400 690 1450 700Q1520 740 1525 810Q1520 850 1450 920Q1400 970 1350 955Q1290 910 1285 840M1340 850Q1345 800 1385 770Q1420 750 1455 780Q1475 820 1460 850Q1415 900 1375 895Q1345 880 1340 850M1415 700L1410 760M1495 745L1460 780M1522 850L1465 842M1455 918L1432 875M1388 960L1393 900M1310 915L1345 880M1285 818L1340 822M1345 748L1370 790M1385 705Q1390 650 1412 650Q1435 655 1435 692M1310 775Q1250 765 1255 800Q1260 830 1285 825M1525 830Q1550 830 1555 860Q1540 885 1505 880M1420 950Q1420 1000 1397 1003Q1375 1000 1378 960M1290 900Q1220 940 1230 975Q1260 1010 1290 970L1320 940",
      "M607 880Q605 870 620 867L650 855L658 915L693 910L665 985Q658 995 652 980L645 950L628 952zM777 940Q775 905 810 905Q820 870 840 870Q868 878 868 908Q900 905 900 935Q895 965 870 962L855 950Q840 970 808 955Q780 970 777 940",
      "M315 885Q440 890 440 1030Q425 1165 315 1170Q200 1160 190 1030Q200 890 315 885M255 998Q255 1080 315 1088Q380 1080 380 1025M263 890L275 790L317 885M365 890L438 828L405 925M432 970L510 983L442 1032M435 1085L490 1168L403 1132M367 1168L372 1270L315 1175M270 1165L203 1240L225 1135M198 1088L135 1077L190 1028M195 970L132 892L228 925",
      "M652 1060L676 1056M772 1045L785 1035Q795 1042 780 1055M765 1095Q790 1098 805 1105Q800 1125 785 1112L760 1102M555 1105Q530 1110 538 1120Q545 1125 558 1115M582 1155L570 1190Q575 1205 590 1190L597 1155M1080 1030L1103 1060",
      "M660 1210Q680 1160 720 1175Q790 1240 788 1300Q780 1340 755 1375Q780 1430 760 1475Q700 1530 635 1490L550 1400Q520 1340 555 1300Q580 1280 640 1250Q655 1235 660 1210M682 1368Q700 1385 693 1398",
      "M857 1140Q858 1125 880 1125L990 1112Q1008 1112 1012 1130L1045 1425M857 1140L892 1452L1223 1405L1200 1170Q1195 1152 1178 1155L1025 1175M895 1190L925 1187L928 1220L898 1223zM953 1182L982 1180L986 1212L956 1215zM900 1242L930 1238L934 1272L904 1275zM958 1232L988 1230L991 1263L961 1266zM908 1292L936 1290L940 1322L911 1326zM965 1283L994 1280L997 1313L968 1316zM1070 1227L1098 1225L1102 1257L1073 1260zM1126 1218L1155 1215L1158 1248L1130 1251zM1075 1278L1104 1275L1107 1308L1078 1311zM1132 1268L1161 1265L1165 1298L1135 1301zM948 1440L940 1368L978 1363L985 1435M1118 1415L1110 1343L1147 1338L1155 1410",
      "M1385 1040Q1510 1050 1510 1180Q1495 1320 1385 1325Q1265 1310 1260 1180Q1270 1050 1385 1040M1375 1160L1420 1195L1400 1260L1345 1255L1328 1200zM1350 1045L1333 1080L1378 1105L1422 1080L1415 1045M1505 1115L1465 1115L1460 1180L1490 1215L1508 1185M1475 1250Q1450 1285 1430 1285L1412 1315M1287 1250L1325 1275L1335 1305M1292 1110L1292 1175L1268 1205M1430 1040L1512 1012Q1480 1050 1490 1075Q1510 1085 1568 1055M1568 1085Q1520 1100 1525 1150Q1530 1180 1568 1180M1500 1245L1568 1205M1412 1380L1515 1355L1493 1450L1470 1405z",
      "M360 1418Q380 1310 405 1312Q425 1330 388 1410Q440 1350 475 1370Q485 1410 400 1415Q460 1450 445 1490Q420 1500 387 1465Q405 1540 380 1555Q340 1550 365 1458Q330 1540 300 1545Q280 1520 330 1445Q270 1450 265 1400Q285 1350 360 1418M430 1498Q450 1520 458 1560M402 1510L415 1560M45 1488L20 1560M195 1450Q190 1500 165 1560M120 1490L112 1508",
      "M1172 1490Q1165 1470 1185 1470L1208 1482L1212 1445Q1220 1435 1228 1448L1225 1485L1250 1480Q1265 1490 1255 1500L1228 1505L1242 1530Q1235 1545 1222 1535L1208 1512L1185 1535Q1170 1535 1175 1520L1195 1500zM1360 1510L1362 1490Q1370 1478 1388 1485L1390 1505L1425 1510Q1430 1525 1420 1530L1395 1535M1360 1512L1338 1518Q1330 1530 1340 1540M690 1560Q740 1530 755 1535L760 1550Q800 1535 830 1560M1005 1560L1040 1508L1085 1550M1568 595L1525 605Q1515 640 1550 695M535 1560L555 1510Q570 1550 612 1552",
    ],
  },
  {
    t: [0, 1460, 0.3954, 0.3444],
    dots: [[41, 199, S], [5, 285, M], [32, 417, S], [89, 538, M], [0, 912, S], [79, 967, 14], [0, 1060, S], [84, 1503, S], [0, 1227, M], [105, 1335, M], [1325, 206, S], [1388, 270, M], [1241, 363, S], [1226, 247, 3], [1271, 520, 14], [189, 1530, M]],
    d: [
      "M0 20Q60 30 72 140L0 112M118 212L65 265Q70 350 118 415M0 535Q20 530 20 540Q18 580 0 590M0 690L22 695L68 790Q72 825 45 835L0 845M22 695L0 740M40 735L0 830M170 600Q120 640 125 690Q110 720 120 760",
      "M1040 180Q1150 190 1150 308Q1140 430 1040 437Q930 430 930 308Q940 190 1040 180M1040 295Q1030 255 1000 270Q975 310 1040 357Q1105 310 1082 270Q1050 255 1040 295M965 328Q960 250 1012 225M1072 225Q1125 260 1112 348M985 362Q1040 420 1088 373",
      "M1182 185Q1175 160 1200 160Q1215 170 1222 195M1180 225Q1182 210 1225 195Q1250 195 1255 225L1275 275Q1270 295 1225 310Q1210 305 1205 290zM868 95Q870 80 890 78L922 85L928 45Q935 35 955 45L945 90L980 105Q980 125 965 128L935 118L922 162Q905 168 892 155L905 115z",
      "M918 450Q1000 430 1040 565L955 587L918 490M955 587L960 615M1018 575L1028 612M1040 600L1075 612M1090 465L1162 468L1160 550L1088 550zM1160 428L1203 430L1200 478L1160 475zM1460 30L1500 10L1517 48L1480 75z",
      "M50 1190Q48 1170 65 1160L90 1155L95 1165Q110 1145 130 1150L148 1195M50 1190L70 1240Q80 1250 95 1242L145 1215M0 1300L55 1325Q65 1340 50 1405L0 1410M30 1410L0 1490M790 335Q800 310 840 325Q860 300 888 320Q890 340 855 345M905 560L912 590M850 305L865 300",
      "M170 1495L190 1500M215 1500L350 1498M190 1556L370 1535Q400 1530 400 1500M460 1500L415 1568M808 1500V1550M870 1500V1515H935V1500M1000 1500V1568",
      "M150 880L165 900M260 882L270 895M340 882V895M480 880L475 895M720 882Q760 895 790 882M1090 895L1130 885M1220 880L1212 895M185 600L200 610M430 602V618M520 602L540 618M640 600V618M740 602L745 618M290 322L280 338M515 322V338M575 335Q610 310 645 335M740 322L750 338M380 1160L375 1175M400 1170L435 1165M620 1160L630 1172M685 1160L680 1172M905 1160L915 1172M1035 1172Q1150 1130 1285 1172",
    ],
  },
  {
    t: [0, 1980, 0.3571, 0.3333],
    dots: [[92, 0, S], [5, 78, S], [106, 120, M], [57, 259, 14], [378, 158, M], [543, 173, M], [348, 312, 14], [760, 195, 14], [847, 147, S], [838, 268, S], [935, 410, S], [389, 427, S], [1270, 62, M], [195, 450, S], [211, 20, M], [184, 316, 6], [184, 316, 2], [735, 408, 4], [1003, 842, S], [875, 830, M], [1392, 872, S]],
    d: [
      "M190 50L400 22Q440 20 440 0M500 0L442 84H1172Q1130 40 1025 58Q900 10 805 80M893 0V38M1105 0V50M962 0V10H1040V0",
      "M185 222L205 110Q215 95 240 105Q258 115 250 130L240 150L248 165L230 180L238 205L228 228Q270 245 262 290L245 340Q225 365 190 355L140 345Q115 330 122 300L130 245Q145 220 185 222M180 325L105 400M190 330L120 385M90 385L105 375L120 395L108 402",
      "M455 450Q420 370 460 310Q520 240 600 252Q680 270 685 325L755 452M460 330Q500 390 545 405M455 430L535 440Q530 400 555 390Q600 370 630 395M490 290Q500 350 545 385M545 265Q540 330 555 375M600 252Q580 270 545 290M640 280Q570 310 580 370M685 330Q620 340 630 390Q680 430 715 452M560 405L565 395M580 405L575 390M600 400L590 385M675 135Q640 200 690 255L800 325Q870 380 850 450",
      "M903 300Q900 200 965 165Q1070 150 1098 262M898 310Q900 300 920 297L1090 265Q1110 270 1115 300Q1115 315 1100 320L930 355Q905 360 900 330zM950 175L940 160L955 150L945 135L962 140L965 122L978 135L990 118L995 135L1010 115L1005 140L1015 155L1000 165L1005 185L985 180L975 195L970 180z",
      "M960 452Q1020 400 1060 380Q1130 385 1145 335M1015 420Q1010 445 1040 452Q1070 430 1045 415M1100 452L1093 425L1120 418L1130 450M1130 430Q1180 370 1250 378M1250 452Q1270 425 1325 452M1440 410Q1480 450 1550 452",
      "M0 378Q80 365 110 430Q125 470 90 520M110 400L130 460M262 452L285 395Q292 385 300 395L342 452M0 460Q8 465 0 475M20 465Q25 495 45 490M0 505L15 500M0 570Q20 590 0 620M5 590L30 570M0 640L20 640M0 752Q50 745 85 730M58 795Q100 790 115 845M115 845L130 808M58 795L100 780M230 868Q290 830 345 868M530 868Q530 835 545 830M645 830L620 868M1080 830L1150 868M1150 850L1165 830M1150 850L1200 865M1200 830L1210 855M1335 830L1330 868M1535 830L1555 868M1360 72L1390 0M1510 72L1540 0M1445 65L1440 72",
    ],
  },
  {
    t: [540, 1980, 0.3444, 0.3333],
    dots: [[87, 12, M], [842, 22, M], [1517, 44, M], [1566, 232, S], [995, 66, 2], [1551, 452, M], [1527, 720, M]],
    d: [
      "M160 0Q140 40 160 45Q190 35 205 0M215 0Q215 50 240 60Q270 40 255 0M270 0Q310 30 322 72M550 0Q590 15 630 0M660 30L740 45Q755 60 755 72M575 70L660 30M935 60L980 8L1045 60M1130 30L1160 10L1205 30M1165 45L1190 30M1310 40Q1310 25 1345 28L1350 0M1380 0L1378 25L1410 25Q1415 45 1380 48L1375 68M1310 40Q1315 55 1340 50V72",
      "M1462 135L1505 158L1473 205L1435 180M1445 335L1500 292Q1510 290 1540 325Q1545 340 1495 388L1450 345zM1450 315Q1430 290 1460 283Q1480 290 1482 300M1405 390L1420 450L1370 425M1240 415L1055 498M1180 420L1225 438L1250 410M1115 478Q1095 520 1105 550M1115 585L1165 578M205 452Q270 435 290 408M530 452L560 410M595 452L598 410M770 452L765 410M975 452L970 410M660 408Q690 420 710 408M800 415L820 405M1085 410Q1110 430 1130 410M1050 728H1150L1225 805M1225 805L1180 770M915 868L1568 740M970 868L1568 765M1425 868Q1425 855 1445 855L1568 838M30 835L45 868M130 868L215 825L218 850L200 868M280 850Q290 830 310 840L330 850Q350 835 375 860M280 850L290 868M475 868Q510 835 545 868M800 835L825 868M680 832Q700 840 715 832",
    ],
  },
];

/* x, y, rotation */
const sparkles = [
  [780, 596, 5], [265, 1024, 4], [532, 1598, 8], [423, 2043, 12],
];

const Doodles = () => (
  <Wallpaper viewBox="0 373 1080 1897" preserveAspectRatio="xMidYMin slice" aria-hidden="true">
    <EmojiDefs />
    {patches.map(({ t: [x, y, sx, sy], d, dots }, i) => (
      <g key={i}>
        <g transform={`translate(${x} ${y}) scale(${sx} ${sy})`}>
          {d.map((p, k) => (
            <path key={k} d={p} />
          ))}
        </g>
        {dots.map(([cx, cy, r], k) => (
          <circle key={k} cx={x + cx * sx} cy={y + cy * sy} r={r} />
        ))}
      </g>
    ))}
    {sparkles.map(([x, y, r], i) => (
      <path key={i} transform={`translate(${x} ${y}) rotate(${r})`} d="M0-21Q3-4 18 0Q3 4 0 21Q-3 4-18 0Q-3-4 0-21z" />
    ))}
    <g fontFamily="Roboto, sans-serif" fontWeight="700" strokeWidth="2.500">
      <text x="742" y="549" fontSize="44" transform="rotate(4 742 549)">1:13</text>
      <text x="97" y="858" fontSize="54" transform="rotate(-14 97 858)">24</text>
      <text x="791" y="669" fontSize="44" transform="rotate(-7 791 669)">***</text>
      <text x="656" y="552" fontSize="60" transform="rotate(-6 656 552)">A</text>
    </g>
    <g strokeWidth="10">
      <path d="M600 483L656 470M627 463Q635 500 645 500M625 527L648 478M622 492Q635 515 655 512" />
    </g>
    <g stroke={c.wall} strokeWidth="5">
      <path d="M600 483L656 470M627 463Q635 500 645 500M625 527L648 478M622 492Q635 515 655 512" />
    </g>
  </Wallpaper>
);

/* ---------- message parts ---------- */

const Ticks = () => (
  <Glyph viewBox="0 0 44 28" $w={44} $h={28} role="img" aria-label="Delivered">
    <path d="M2 16L10.500 26L31 2M21 23l4 3L43 2" fill="none" stroke="currentColor" strokeWidth="4" strokeLinejoin="round" strokeLinecap="round" />
  </Glyph>
);

type MsgProps = {
  out?: boolean;
  tail?: boolean;
  joined?: boolean;
  time: string;
  quote?: { name?: string; body?: React.ReactNode };
  children: React.ReactNode;
};

const Message = ({ out, tail, joined, time, quote, children }: MsgProps) => (
  <Bubble $out={out} $tail={tail} $joined={joined}>
    {tail && (
      <TailShape $out={out} width="21" height="31" viewBox="0 0 21 31" aria-hidden="true">
        <path d="M0 0H15Q21 0 20 5Q20 7 18 10L0 31z" />
      </TailShape>
    )}
    {quote && (
      <Quote $out={out}>
        {quote.name && <QuoteName $out={out}>{quote.name}</QuoteName>}
        {quote.body && <QuoteText $out={out}>{quote.body}</QuoteText>}
      </Quote>
    )}
    <Row $out={out} $quoted={!!quote}>
      <Body>{children}</Body>
      <Meta $out={out}>
        <time>{time}</time>
        {out && <Ticks />}
      </Meta>
    </Row>
  </Bubble>
);

const faceRun: Kind[] = ["woozy", "woozy", "pleading", "pleading"];

/* ---------- screen ---------- */

export default function App() {
  return (
    <Screen>
      <Global />
      <StatusBar>
        <StatusGroup $gap={20}>
          <Clock>8:18</Clock>
          <svg width="30" height="30" viewBox="0 0 30 30" aria-label="Google" role="img">
            <path d="M24.500 6.500A12 12 0 1 0 27 15.500H15.500" fill="none" stroke="currentColor" strokeWidth="6" />
          </svg>
          <svg width="32" height="8" viewBox="0 0 32 8" fill="currentColor" aria-hidden="true">
            <circle cx="4" cy="4" r="3.200" />
            <circle cx="16" cy="4" r="3.200" />
            <circle cx="28" cy="4" r="3.200" />
          </svg>
        </StatusGroup>
        <StatusGroup $gap={15}>
          <StatusGroup $gap={10}>
            <Speed>
              <span>6.45</span>
              <span>KB/s</span>
            </Speed>
            <svg width="43" height="32" viewBox="0 0 43 32" fill="none" stroke="currentColor" strokeWidth="4" aria-hidden="true">
              <path d="M15 5Q18 2 23 2H30A11 10.500 0 0 1 30 23H22Q15 22 13 16" />
              <path d="M28 27Q25 30 20 30H13A11 10.500 0 0 1 13 9H21Q28 10 30 16" />
            </svg>
          </StatusGroup>
          <svg width="44" height="40" viewBox="0 0 44 40" fill="none" stroke="currentColor" strokeWidth="3.500" aria-hidden="true">
            <path d="M11 20V13Q13 2 22 2Q27 2 30 5M33 12V20L38 31H14M5 34L36 2" />
            <path d="M8 10V22M2 13V19M38 10V22M43 13V19" strokeWidth="2.500" />
            <path d="M16 35H28Q22 41 16 35z" fill="currentColor" stroke="none" />
          </svg>
          <svg width="66" height="42" viewBox="0 -4 66 42" fill="currentColor" role="img" aria-label="Signal">
            <text x="4" y="15" fontSize="19" fontWeight="700">H+</text>
            <path d="M0 27l6 6V22h-3v6zM9 22h-2v11h3V26l5 1z" />
            <path d="M18 28l6-3v9h-6zM29 23l6-4v15h-6zM39 17l6-4v21h-6zM49 11l6-4v27h-6zM59 6l6-3v31h-6z" />
          </svg>
          <StatusGroup $gap={7}>
            <svg width="69" height="31" viewBox="0 0 69 31" role="img" aria-label="Battery">
              <rect x="1.500" y="1.500" width="60" height="28" rx="7" fill="none" stroke="currentColor" strokeWidth="3" />
              <path d="M10 6H41V25H10Q6 25 6 21V10Q6 6 10 6z" fill="#4fb519" />
              <rect x="65" y="10" width="4" height="11" rx="2" fill="currentColor" />
              <text x="31" y="24" textAnchor="middle" fontSize="23" fontWeight="500" fill="#fff">72</text>
            </svg>
            <svg width="18" height="31" viewBox="0 0 18 31" fill="#d4d6d8" aria-hidden="true">
              <path d="M12 0L1 14L8 15L0 20L8 20L5 31L17 16L10 15L18 11L10 11z" />
            </svg>
          </StatusGroup>
        </StatusGroup>
      </StatusBar>

      <Header>
        <IconButton $width={66} aria-label="Back">
          <svg width="66" height="66" viewBox="0 0 24 24" fill="#f7f8fa">
            <path d="M20 11H7.830l5.590-5.590L12 4l-8 8 8 8 1.410-1.410L7.830 13H20z" />
          </svg>
        </IconButton>
        <Contact>
          <svg width="96" height="96" viewBox="0 0 96 96" aria-hidden="true">
            <clipPath id="avatar"><circle cx="48" cy="48" r="47" /></clipPath>
            <circle cx="48" cy="48" r="48" fill="#627884" />
            <circle cx="48" cy="42" r="16" fill="#d0d8df" />
            <path d="M14 94Q14 64 48 64Q82 64 82 94z" fill="#d0d8df" clipPath="url(#avatar)" />
          </svg>
          <Name>Usra</Name>
        </Contact>
        <IconButton $width={132} aria-label="Video call">
          <svg width="56" height="46" viewBox="0 0 56 46">
            <rect x="3" y="3" width="39" height="40" rx="2.500" fill="none" stroke="currentColor" strokeWidth="6" />
            <path d="M44 19L54 9.500Q56 9 56 11V35Q56 37 54 36L44 27z" fill="currentColor" />
          </svg>
        </IconButton>
        <IconButton $width={132} aria-label="Voice call">
          <svg width="66" height="66" viewBox="0 0 24 24" fill="currentColor">
            <path d="M19.950 21q-3.125 0-6.175-1.362t-5.550-3.863-3.862-5.550T3 4.050q0-.45.3-.75t.75-.3H8.100q.35 0 .625.238t.325.562l.65 3.500q.05.4-.025.675T9.400 8.450L6.975 10.900q.5.925 1.187 1.787t1.513 1.663q.775.775 1.625 1.438T13.100 17l2.350-2.350q.225-.225.588-.338t.712-.062l3.450.7q.35.1.575.363T21 15.900v4.050q0 .45-.3.75t-.75.3M6.025 9l1.650-1.650L7.250 5H5.025q.125 1.025.35 2.025T6.025 9m8.950 8.950q.975.425 1.988.675T19 18.950v-2.200l-2.350-.475z" />
          </svg>
        </IconButton>
        <IconButton $width={99} aria-label="More options">
          <svg width="12" height="46" viewBox="0 0 12 46" fill="currentColor">
            <circle cx="6" cy="6" r="6" />
            <circle cx="6" cy="23" r="6" />
            <circle cx="6" cy="40" r="6" />
          </svg>
        </IconButton>
      </Header>

      <PinnedBar>
        <Markers>
          <Marker />
          <Marker />
          <Marker $active />
        </Markers>
        <PinTile>
          <svg width="34" height="56" viewBox="0 0 34 56" fill="none" stroke="#8f979b" strokeWidth="5.500" strokeLinecap="round" strokeLinejoin="round">
            <path d="M6 3H28M8.500 4V26L3 32V34H31V32L25.500 26V4M17 36V52" />
          </svg>
        </PinTile>
        <svg width="24" height="33" viewBox="0 0 24 33" fill="none" stroke="#8a8f93" strokeWidth="3.200" strokeLinecap="round" aria-hidden="true">
          <rect x="8" y="2" width="8" height="17" rx="4" />
          <path d="M2 15.500Q3 25 12 25Q21 25 22 15.500M12 26V31" />
        </svg>
        <PinnedText>Voice message (0:03)</PinnedText>
      </PinnedBar>

      <Chat>
        <Doodles />
        <Messages>
          <Message out time="8:16 pm" quote={{}}>Sad loif</Message>
          <Message tail time="8:16 pm" quote={{ name: "You", body: "Sad loif" }}>Shut up you dash</Message>
          <Message out tail time="8:16 pm" quote={{ name: "Usra", body: "Shut up you dash" }}>
            {faceRun.map((k, i) => <Emoji key={i} kind={k} />)}
          </Message>
          <Message tail time="8:17 pm" quote={{ name: "You", body: faceRun.map((k, i) => <Emoji key={i} kind={k} small />) }}>
            <Hand />
            <Hand flip />
          </Message>
          <Message joined time="8:17 pm">
            <Glyph role="img" aria-label="👀" viewBox="0 0 90 78" $w={90} $h={78} $my={18} $mx={3}><Eyes /></Glyph>
          </Message>
          <Message joined time="8:17 pm">Solly</Message>
          <Message joined time="8:17 pm">Molly</Message>
          <Message joined time="8:17 pm">On your nosy</Message>
          <Message joined time="8:17 pm">I love you holy</Message>
          <Message joined time="8:17 pm">{"My cute loli "}<Emoji kind="kiss" /></Message>
          <Message out tail time="8:18 pm">{"What the fuck "}<Emoji kind="joy" /></Message>
          <ScrollThumb />
        </Messages>

        <Composer onSubmit={(e) => e.preventDefault()}>
          <Pill>
            <PlainButton type="button" aria-label="Emoji">
              <svg width="56" height="56" viewBox="0 0 56 56" fill="currentColor">
                <circle cx="28" cy="28" r="25" fill="none" stroke="currentColor" strokeWidth="5.500" />
                <circle cx="18.500" cy="20.500" r="4.300" />
                <circle cx="37.500" cy="20.500" r="4.300" />
                <path d="M15 33H41Q38 43 28 43Q18 43 15 33z" />
              </svg>
            </PlainButton>
            <Field>
              <Caret />
              <MessageInput type="text" placeholder="Message" aria-label="Message" />
            </Field>
            <PillActions>
              <PlainButton type="button" aria-label="Attach">
                <svg width="35" height="56" viewBox="0 0 35 56" fill="none" stroke="currentColor" strokeWidth="5.200" strokeLinecap="round">
                  <path d="M32.500 14V38.500a15 15 0 0 1-30 0V12.500a10 10 0 0 1 20 0V38a5 5 0 0 1-10 0V14" />
                </svg>
              </PlainButton>
              <PlainButton type="button" aria-label="Camera">
                <svg width="56" height="50" viewBox="0 0 56 50" fill="none" stroke="currentColor" strokeWidth="5.500" strokeLinejoin="round">
                  <path d="M3 9H16L21 3H35L40 9H53V47H3z" />
                  <circle cx="28" cy="28" r="10" />
                </svg>
              </PlainButton>
            </PillActions>
          </Pill>
          <VoiceButton type="button" aria-label="Record voice message">
            <svg width="38" height="54" viewBox="0 0 38 54" fill="none" stroke="currentColor" strokeWidth="5" strokeLinecap="round">
              <rect x="11" y="0" width="16" height="34" rx="8" fill="currentColor" stroke="none" />
              <path d="M3 28Q5 42.500 19 42.500Q33 42.500 35 28M19 44V51" />
            </svg>
          </VoiceButton>
        </Composer>
      </Chat>

      <NavBar>
        <NavButton aria-label="Recent apps">
          <svg width="40" height="40" viewBox="0 0 40 40"><rect x="0" y="0" width="39" height="39" rx="6" fill="#fff" /></svg>
        </NavButton>
        <NavButton aria-label="Home">
          <svg width="56" height="56" viewBox="0 0 56 56">
            <circle cx="28" cy="28" r="24.500" fill="none" stroke="#fff" strokeWidth="5" />
            <circle cx="28" cy="28" r="15" fill="#fff" />
          </svg>
        </NavButton>
        <NavButton aria-label="Back">
          <svg width="38" height="46" viewBox="0 0 38 46"><path d="M35 1L2 21Q-1 23 2 25L35 45Q37 46 37 43V3Q37 0 35 1z" fill="#fff" /></svg>
        </NavButton>
      </NavBar>
    </Screen>
  );
}
